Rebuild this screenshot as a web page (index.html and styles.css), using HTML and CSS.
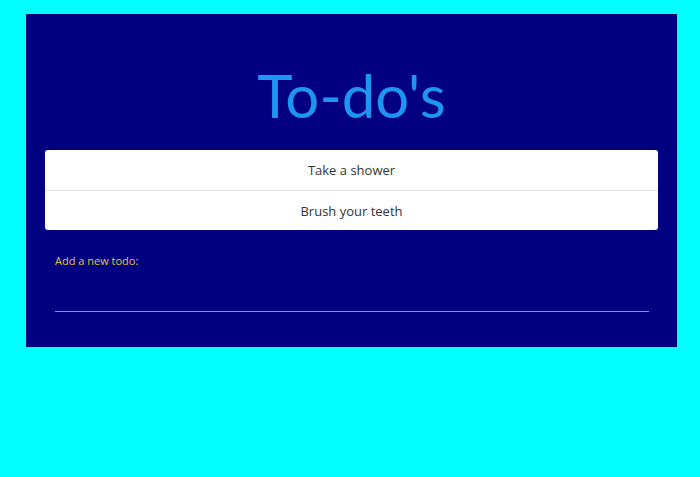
FILE: index.html
```html
<!DOCTYPE html>
<html>
<head>
<meta charset="utf-8">
<link rel="stylesheet" href="styles.css">
</head>
<body>
<div class="app">
  <h1 class="title">To-do's</h1>
  <ul class="list">
    <li class="item">Take a shower</li>
    <li class="item">Brush your teeth</li>
  </ul>
  <form class="add">
    <label class="label" for="new">Add a new todo:</label>
    <input class="input" id="new" type="text">
  </form>
</div>
</body>
</html>
```
FILE: styles.css
```css
html, body {
  margin: 0;
  background: #00ffff;
  font-family: "Open Sans", "Noto Sans", sans-serif;
}
body {
  padding: 14px 23px 0 26px;
}
.app {
  width: 651px;
  height: 333px;
  box-sizing: border-box;
  background: #000080;
  padding: 0 19px;
}
.title {
  margin: 0;
  padding-top: 41px;
  height: 136px;
  box-sizing: border-box;
  text-align: center;
  font-family: "Lato", "Open Sans", sans-serif;
  font-weight: 400;
  font-size: 60px;
  line-height: 80px;
  color: #1e95f0;
}
.list {
  list-style: none;
  margin: 0;
  padding: 0;
  background: #fff;
  border-radius: 3px;
  overflow: hidden;
}
.item {
  height: 40px;
  box-sizing: border-box;
  display: flex;
  align-items: center;
  justify-content: center;
  font-size: 13px;
  color: #333;
}
.item + .item {
  border-top: 1px solid #e2e2e2;
}
.add {
  display: flex;
  flex-direction: column;
  padding: 24px 9px 0 10px;
}
.label {
  font-size: 11px;
  color: #e3c24a;
  line-height: 14px;
}
.input {
  margin-top: 23px;
  background: transparent;
  border: none;
  border-bottom: 1px solid #8c8ccf;
  height: 20px;
  padding: 0;
  outline: none;
  color: #fff;
}
```
